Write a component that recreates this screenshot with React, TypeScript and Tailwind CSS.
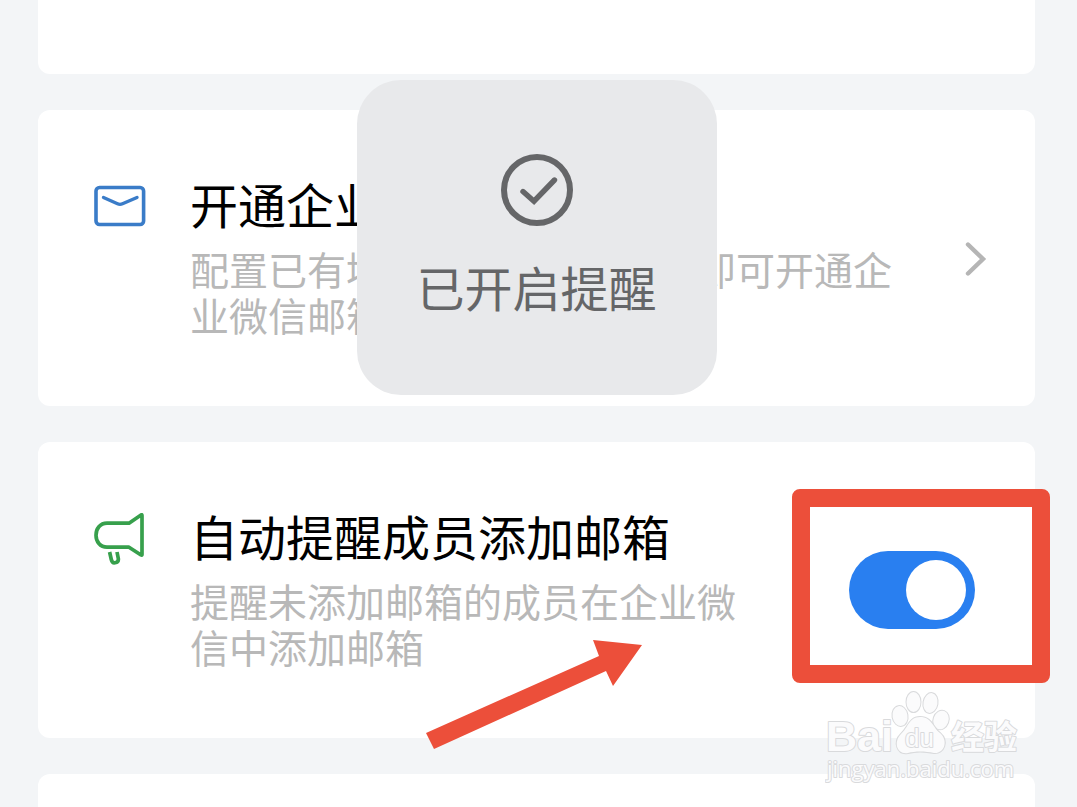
import React, { useState } from "react";

const MailIcon = () => (
  <svg viewBox="0 0 52 52" className="w-[52px] h-[52px]" fill="none">
    <rect
      x="2"
      y="6.5"
      width="47.6"
      height="37"
      rx="3.5"
      stroke="#3a7cc8"
      strokeWidth="3.6"
    />
    <path
      d="M9.5 16.5 L23.5 22.8 Q26 23.9 28.5 22.8 L43 16.5"
      stroke="#3a7cc8"
      strokeWidth="3.4"
      strokeLinecap="round"
    />
  </svg>
);

const MegaphoneIcon = () => (
  <svg
    viewBox="0 0 52 52"
    className="w-[52px] h-[52px]"
    fill="none"
    stroke="#37a04c"
    strokeWidth="3.7"
    strokeLinejoin="round"
    strokeLinecap="round"
  >
    <path d="M13 10.2 H35 L47 2 Q48 1.3 48 2.5 V41.5 Q48 42.6 47 42 L35 34.2 H13 C6 34.2 2 28.5 2 22.2 C2 15.8 6 10.2 13 10.2 Z" />
    <path
      d="M15.6 39 L17.3 46.5 Q18.2 50.3 21 49.8 Q24.8 49 24.3 45.5 L23 39"
      strokeLinecap="butt"
    />
  </svg>
);

const ChevronIcon = () => (
  <svg viewBox="0 0 22 36" className="w-[22px] h-9 shrink-0" fill="none">
    <path
      d="M3 4.5 L18 19 L3 33.5"
      stroke="#b5b5b5"
      strokeWidth="4.4"
      strokeLinecap="round"
    />
  </svg>
);

const CheckCircleIcon = () => (
  <svg
    viewBox="0 0 72 72"
    className="w-[72px] h-[72px]"
    fill="none"
    stroke="#656668"
  >
    <circle cx="36" cy="36" r="33" strokeWidth="6" />
    <path
      d="M22 37.5 L33 47.2 L53.5 26"
      strokeWidth="5.4"
      strokeLinecap="round"
    />
  </svg>
);

const Watermark = () => (
  <svg
    viewBox="0 0 200 100"
    className="absolute right-[52px] bottom-[16px] w-[200px] h-[100px] pointer-events-none"
    fill="#fbfbfc"
    stroke="#d9dadc"
    strokeWidth="2"
    strokeLinejoin="round"
    paintOrder="stroke"
  >
    <g className="font-['Liberation_Sans','Noto_Sans_CJK_SC',sans-serif] font-bold">
      <text x="1" y="60" fontSize="43">
        Bai
      </text>
      <text x="126" y="58" fontSize="33">
        经验
      </text>
    </g>
    <ellipse cx="75" cy="25" rx="7.5" ry="10" transform="rotate(-10 75 25)" />
    <ellipse cx="88.5" cy="11" rx="7" ry="10" />
    <ellipse cx="105.5" cy="12" rx="7" ry="10" transform="rotate(10 105.5 12)" />
    <ellipse cx="116" cy="29" rx="7.5" ry="9.5" transform="rotate(20 116 29)" />
    <path d="M95 26 C107 26 108 37 115 42 C124 50 119 63 109 62 C100 60 90 60 83 62 C72 64 68 51 76 43 C83 37 84 26 95 26 Z" />
    <text
      x="80"
      y="56"
      fontSize="26"
      className="font-['Liberation_Sans',sans-serif]"
    >
      du
    </text>
    <text
      x="2"
      y="86"
      fontSize="22"
      className="font-['Open_Sans',sans-serif] font-medium"
    >
      jingyan.baidu.com
    </text>
  </svg>
);

const RowText = ({ title, lines }: { title: string; lines: string[] }) => (
  <span className="flex-1 flex flex-col gap-[14px] pb-1 whitespace-nowrap">
    <span className="text-[48px] leading-[56px] text-black">{title}</span>
    <span className="text-[39px] leading-[46px] text-[#b8b8b8]">
      {lines.map((line) => (
        <span key={line} className="block">
          {line}
        </span>
      ))}
    </span>
  </span>
);

const Toast = () => (
  <div
    role="status"
    className="absolute left-1/2 -translate-x-1/2 top-[80px] w-[360px] rounded-[44px] bg-[#e8e9eb] pt-[74px] pb-[77px] flex flex-col items-center gap-7 text-[#656668]"
  >
    <CheckCircleIcon />
    <p className="text-[48px] leading-[64px]">已开启提醒</p>
  </div>
);

const App = () => {
  const [remind, setRemind] = useState(true);

  return (
    <div className="relative min-h-screen overflow-hidden bg-[#f3f5f7] pl-[38px] pr-[42px] font-['Noto_Sans_CJK_SC',sans-serif]">
      <main className="relative flex flex-col gap-9">
        <section className="h-[74px] rounded-b-xl bg-white" />

        <a
          href="#mail"
          className="flex items-start gap-11 rounded-xl bg-white py-[65px] pl-14 pr-12"
        >
          <span className="pt-1.5">
            <MailIcon />
          </span>
          <RowText
            title="开通企业微信邮箱"
            lines={["配置已有域名或注册新域名，即可开通企", "业微信邮箱"]}
          />
          <span className="self-center">
            <ChevronIcon />
          </span>
        </a>

        <label className="flex items-start gap-11 rounded-xl bg-white py-[65px] pl-14 pr-[60px]">
          <span className="pt-1.5">
            <MegaphoneIcon />
          </span>
          <RowText
            title="自动提醒成员添加邮箱"
            lines={["提醒未添加邮箱的成员在企业微", "信中添加邮箱"]}
          />
          <span className="relative self-center flex">
            <input
              type="checkbox"
              role="switch"
              checked={remind}
              onChange={(e) => setRemind(e.target.checked)}
              className="appearance-none flex items-center w-[126px] h-[78px] rounded-full px-[9px] bg-gray-300 checked:bg-[#297ff0] checked:justify-end before:content-[''] before:block before:w-[60px] before:h-[60px] before:rounded-full before:bg-white"
            />
            <span className="absolute -left-[57px] -right-[75px] -top-[62px] -bottom-[54px] rounded-lg border-[18px] border-[#ec4f3a] pointer-events-none" />
          </span>
        </label>

        <section className="h-[33px] rounded-t-xl bg-white" />

        <svg
          viewBox="0 0 216 110"
          className="absolute left-[388px] top-[640px] w-[216px] h-[110px] pointer-events-none"
        >
          <path
            d="M216 5 L167 0 L173 16 L0 93 L8 109 L180 31 L187 46 Z"
            fill="#ec4f3a"
          />
        </svg>

        <Toast />
      </main>

      <Watermark />
    </div>
  );
};

export default App;
